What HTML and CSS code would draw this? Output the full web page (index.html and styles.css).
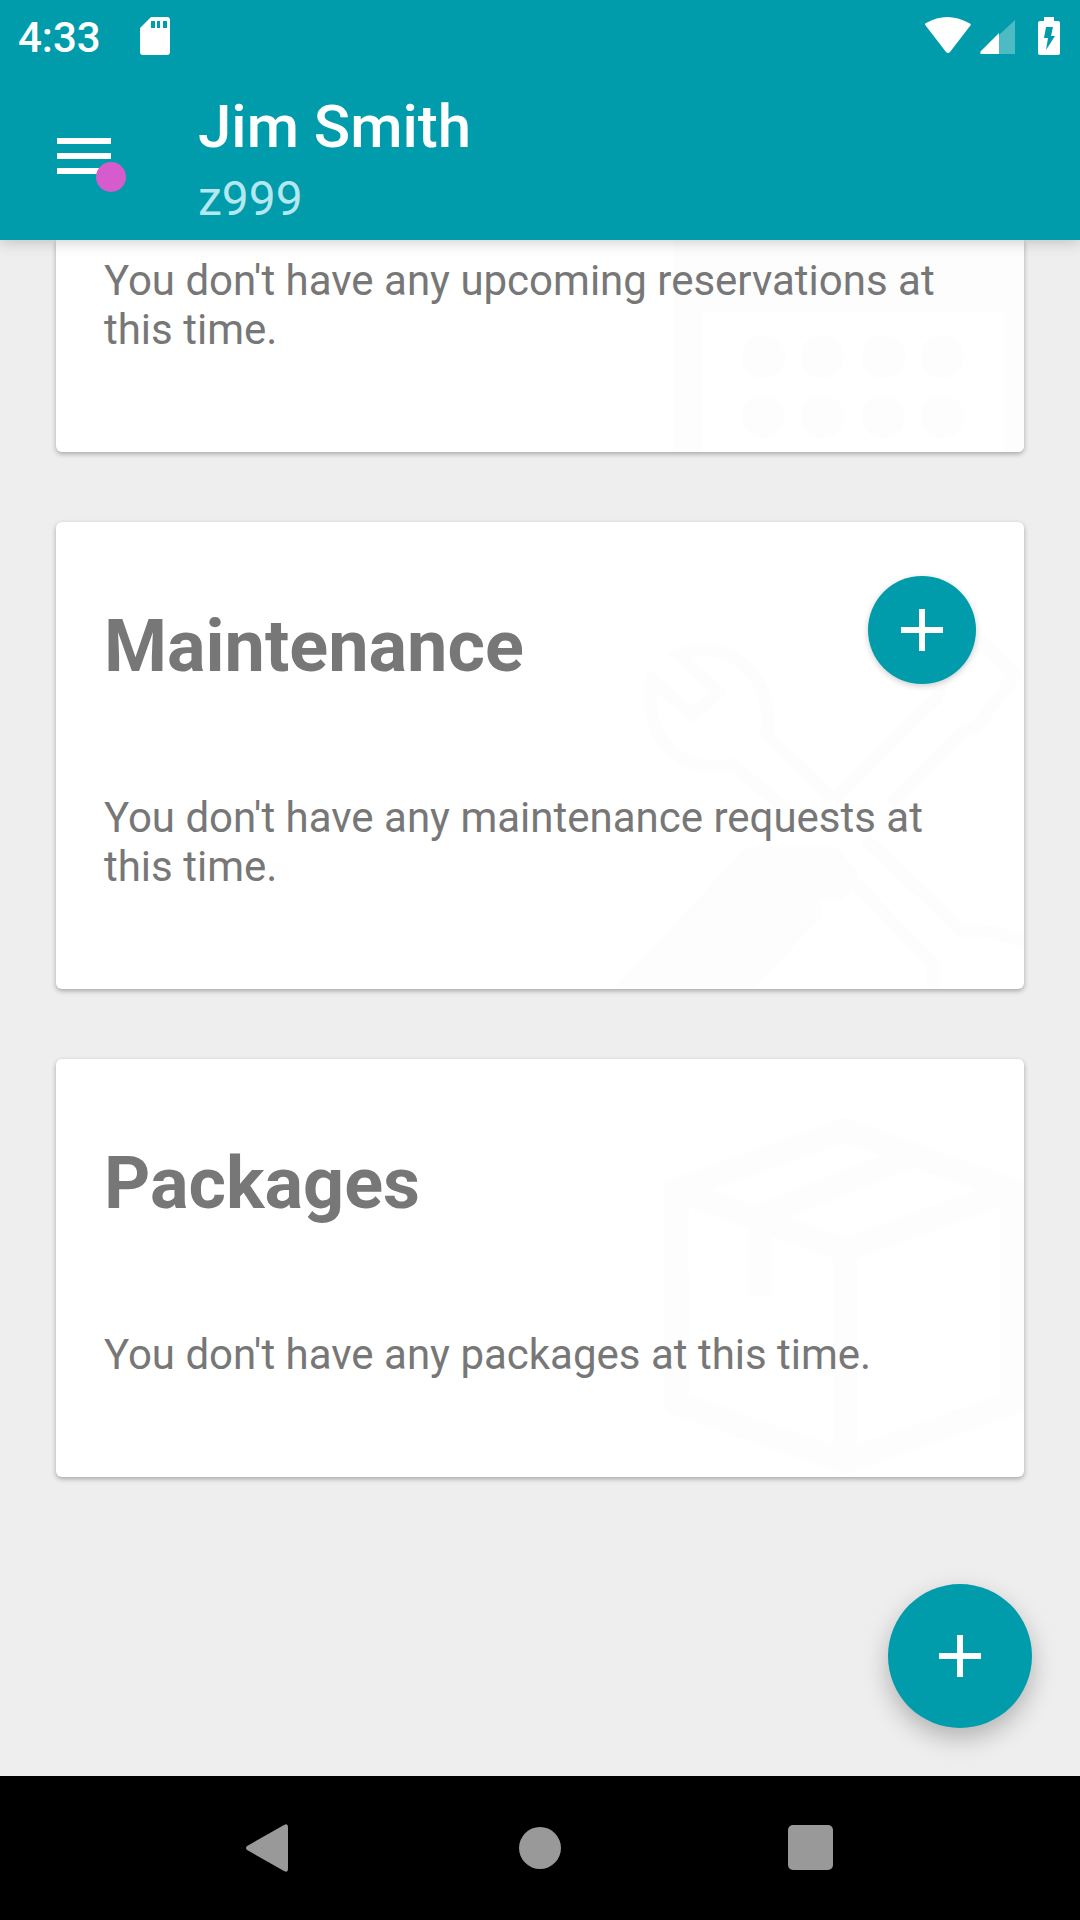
FILE: index.html
```html
<!DOCTYPE html>
<html lang="en">
<head>
    <meta charset="UTF-8">
    <meta name="viewport" content="width=device-width, initial-scale=1.0">
    <title>Jim Smith</title>
    <link rel="stylesheet" href="styles.css">
</head>
<body>
    <header class="header">
        <div class="status-bar">
            <span class="time">4:33</span>
            <svg class="sd-icon" width="30" height="42" viewBox="0 0 30 42">
                <path fill="#fff" fill-rule="evenodd" d="M11 0H27Q30 0 30 3V35Q30 38 27 38H3Q0 38 0 35V11ZM11 4V11H15V4ZM17 4V11H20V4ZM23 4V11H27V4Z"/>
            </svg>
            <div class="status-icons">
                <svg width="46" height="42" viewBox="0 0 46 42">
                    <path fill="#fff" d="M1 9Q-1 7 1 6Q22 -6 44 6Q47 7 45 9L25 35Q23 37 21 35Z"/>
                </svg>
                <svg class="signal-icon" width="35" height="42" viewBox="0 0 35 42">
                    <path fill="#fff" fill-opacity=".3" d="M19 18L35 3V37H19Z"/>
                    <path fill="#fff" d="M19 16V37H2Q-1 37 1 34Z"/>
                </svg>
                <svg width="22" height="42" viewBox="0 0 22 42">
                    <path fill="#fff" fill-rule="evenodd" d="M6 0H16V4H20Q22 4 22 6V36Q22 38 20 38H2Q0 38 0 36V6Q0 4 2 4H6ZM8 10L6 21H10L8 33L17 19H13L15 10Z"/>
                </svg>
            </div>
        </div>
        <div class="app-bar">
            <button class="menu-btn" aria-label="Menu">
                <svg width="72" height="72" viewBox="0 0 24 24">
                    <path fill="#fff" d="M3 18h18v-2H3v2zm0-5h18v-2H3v2zm0-7v2h18V6H3z"/>
                </svg>
                <span class="badge"></span>
            </button>
            <div class="user">
                <h1 class="user-name">Jim Smith</h1>
                <p class="user-unit">z999</p>
            </div>
        </div>
    </header>

    <main class="content">
        <!-- Reservations, scrolled under the header -->
        <section class="card card-scrolled">
            <svg class="card-art" width="424" height="212" viewBox="0 30 1272 636">
                <path d="M220 30H1272V666H1212V245H305V666H220Z"/>
                <circle cx="490" cy="380" r="65"/>
                <circle cx="667" cy="380" r="65"/>
                <circle cx="850" cy="380" r="65"/>
                <circle cx="1027" cy="380" r="65"/>
                <circle cx="490" cy="560" r="65"/>
                <circle cx="667" cy="560" r="65"/>
                <circle cx="850" cy="560" r="65"/>
                <circle cx="1027" cy="560" r="65"/>
            </svg>
            <p class="card-text">You don't have any upcoming reservations at this time.</p>
        </section>

        <section class="card">
            <svg class="card-art" width="424" height="359" viewBox="0 360 1272 1077">
                <!-- wrench -->
                <path class="line" d="M560 900L400 765C210 800 130 650 155 510L280 615L355 545L235 435C400 370 530 520 500 675L700 865M795 985L1085 1262Q1190 1255 1290 1305M760 1115L1000 1360V1450"/>
                <!-- screwdriver -->
                <path class="line" d="M700 870L1010 565L1030 500L1150 400L1245 495L1130 650L1085 665L870 885"/>
                <path d="M440 1010H710L775 1090L735 1165Q690 1180 660 1165L665 1220L460 1437H40Z"/>
            </svg>
            <div class="card-head">
                <h2 class="card-title">Maintenance</h2>
                <button class="add-btn" aria-label="Add maintenance request">
                    <svg width="72" height="72" viewBox="0 0 24 24"><path fill="#fff" d="M19 13h-6v6h-2v-6H5v-2h6V5h2v6h6z"/></svg>
                </button>
            </div>
            <p class="card-text">You don't have any maintenance requests at this time.</p>
        </section>

        <section class="card">
            <svg class="card-art" width="424" height="370" viewBox="0 201 1272 1110">
                <path class="line line-thick" d="M735 270L1235 450V1090L735 1265L230 1090V450ZM230 450L735 630L1235 450M735 630V1265M930 350L480 530V768"/>
            </svg>
            <div class="card-head">
                <h2 class="card-title">Packages</h2>
            </div>
            <p class="card-text">You don't have any packages at this time.</p>
        </section>

        <button class="add-btn fab" aria-label="Add">
            <svg width="72" height="72" viewBox="0 0 24 24"><path fill="#fff" d="M19 13h-6v6h-2v-6H5v-2h6V5h2v6h6z"/></svg>
        </button>
    </main>

    <nav class="nav-bar">
        <button class="nav-btn" aria-label="Back">
            <svg width="48" height="48" viewBox="0 0 48 48"><path fill="#999" d="M1 22L38 1Q42 -1 42 3V45Q42 49 38 47L1 26Q-1 24 1 22Z"/></svg>
        </button>
        <button class="nav-btn" aria-label="Home">
            <svg width="48" height="48" viewBox="0 0 48 48"><circle fill="#999" cx="24" cy="24" r="21"/></svg>
        </button>
        <button class="nav-btn" aria-label="Recent apps">
            <svg width="48" height="48" viewBox="0 0 48 48"><rect fill="#999" x="2" y="1" width="45" height="45" rx="5"/></svg>
        </button>
    </nav>
</body>
</html>
```

FILE: styles.css
```css
* {
    box-sizing: border-box;
    margin: 0;
    padding: 0;
}

body {
    display: flex;
    flex-direction: column;
    min-height: 100vh;
    background-color: #eee;
    color: #777;
    font-family: Roboto, sans-serif;
}

button {
    border: none;
    background: none;
    cursor: pointer;
}

svg {
    display: block;
}

/* Header */
.header {
    position: relative;
    z-index: 1;
    background-color: #009cab;
    color: #fff;
    box-shadow: 0 2px 14px rgba(0, 0, 0, 0.2);
}

.status-bar {
    display: flex;
    height: 72px;
    padding: 17px 20px 0 18px;
}

.time {
    font-size: 42px;
    font-weight: 500;
    line-height: 42px;
}

.sd-icon {
    margin-left: 39px;
}

.status-icons {
    display: flex;
    margin-left: auto;
}

.signal-icon {
    margin: 0 23px 0 9px;
}

.app-bar {
    display: flex;
    align-items: center;
    height: 168px;
    padding: 0 48px;
}

.menu-btn {
    position: relative;
}

.badge {
    position: absolute;
    right: -6px;
    bottom: 0;
    width: 30px;
    height: 30px;
    border-radius: 50%;
    background-color: #d65bcd;
}

.user {
    padding-top: 7px;
    margin-left: 78px;
}

.user-name {
    font-size: 60px;
    font-weight: 500;
    line-height: 70px;
}

.user-unit {
    margin-top: 9px;
    color: #b3e8f0;
    font-size: 48px;
    line-height: 56px;
}

/* Cards */
.content {
    position: relative;
    flex: 1;
    display: flex;
    flex-direction: column;
    gap: 70px;
    padding: 0 56px 192px;
}

.card {
    position: relative;
    overflow: hidden;
    padding: 54px 48px 98px;
    border-radius: 6px;
    background-color: #fff;
    box-shadow: 0 2px 5px rgba(0, 0, 0, 0.3);
}

.card-scrolled {
    padding-top: 16px;
    border-radius: 0 0 6px 6px;
}

.card-art {
    position: absolute;
    right: 0;
    bottom: 0;
    fill: #fdfdfd;
}

.line {
    fill: none;
    stroke: #fdfdfd;
    stroke-width: 38;
}

.line-thick {
    stroke-width: 72;
}

.card-head {
    position: relative;
    display: flex;
    justify-content: space-between;
    align-items: flex-start;
    margin-bottom: 104px;
}

.card-title {
    padding-top: 29px;
    font-size: 72px;
    font-weight: bold;
    line-height: 84px;
}

.card-text {
    position: relative;
    font-size: 42px;
    line-height: 49px;
}

.add-btn {
    display: flex;
    justify-content: center;
    align-items: center;
    width: 108px;
    height: 108px;
    border-radius: 50%;
    background-color: #009cab;
    box-shadow: 0 2px 6px rgba(0, 0, 0, 0.2);
}

.fab {
    position: absolute;
    right: 48px;
    bottom: 48px;
    width: 144px;
    height: 144px;
    box-shadow: 0 10px 24px rgba(0, 0, 0, 0.25);
}

/* Bottom navigation */
.nav-bar {
    position: relative;
    display: flex;
    justify-content: center;
    height: 144px;
    background-color: #000;
}

.nav-btn {
    display: flex;
    justify-content: center;
    align-items: center;
    width: 25%;
}
```
